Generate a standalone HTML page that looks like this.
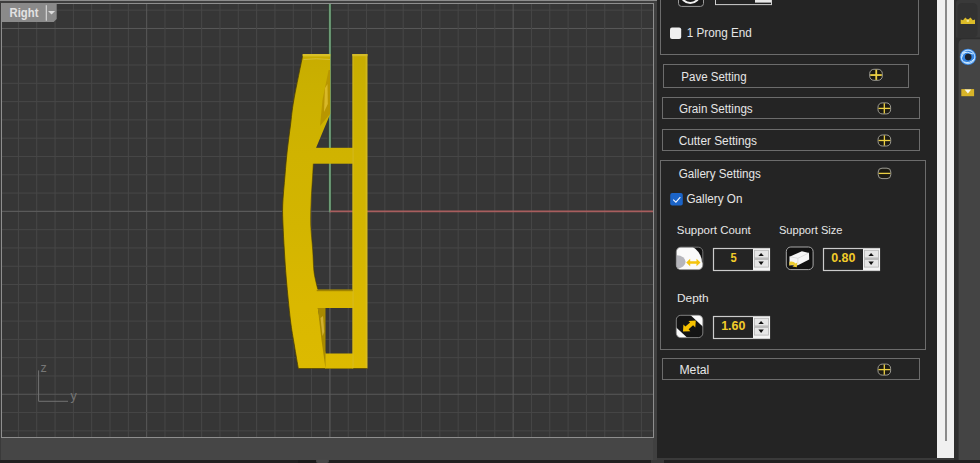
<!DOCTYPE html>
<html><head><meta charset="utf-8"><title>Rhino Gallery Settings</title>
<style>html,body{margin:0;padding:0;width:980px;height:463px;overflow:hidden;background:#1e1e1e;font-family:"Liberation Sans",sans-serif;}</style>
</head><body><svg width="980" height="463" viewBox="0 0 980 463" style="position:absolute;left:0;top:0;display:block"><rect x="0" y="0" width="980" height="463" fill="#1e1e1e"/><rect x="0" y="0" width="657" height="1" fill="#8c8c8c"/><rect x="0" y="1" width="657" height="2" fill="#3e3e3e"/><rect x="0" y="437" width="657" height="23" fill="#464646"/><rect x="653" y="3" width="4" height="457" fill="#404040"/><rect x="0" y="3" width="1" height="457" fill="#3a3a3a"/><rect x="2" y="4" width="651" height="433" fill="#363636"/><line x1="18.41" y1="4" x2="18.41" y2="437" stroke="#474747" stroke-width="1"/><line x1="36.73" y1="4" x2="36.73" y2="437" stroke="#474747" stroke-width="1"/><line x1="55.05" y1="4" x2="55.05" y2="437" stroke="#474747" stroke-width="1"/><line x1="73.38" y1="4" x2="73.38" y2="437" stroke="#474747" stroke-width="1"/><line x1="91.7" y1="4" x2="91.7" y2="437" stroke="#474747" stroke-width="1"/><line x1="110.02" y1="4" x2="110.02" y2="437" stroke="#474747" stroke-width="1"/><line x1="128.35" y1="4" x2="128.35" y2="437" stroke="#474747" stroke-width="1"/><line x1="2" y1="10.16" x2="653" y2="10.16" stroke="#474747" stroke-width="1"/><line x1="146.67" y1="4" x2="146.67" y2="437" stroke="#5a5a5a" stroke-width="1"/><line x1="2" y1="28.45" x2="653" y2="28.45" stroke="#5a5a5a" stroke-width="1"/><line x1="164.99" y1="4" x2="164.99" y2="437" stroke="#474747" stroke-width="1"/><line x1="2" y1="46.74" x2="653" y2="46.74" stroke="#474747" stroke-width="1"/><line x1="183.32" y1="4" x2="183.32" y2="437" stroke="#474747" stroke-width="1"/><line x1="2" y1="65.03" x2="653" y2="65.03" stroke="#474747" stroke-width="1"/><line x1="201.64" y1="4" x2="201.64" y2="437" stroke="#474747" stroke-width="1"/><line x1="2" y1="83.32" x2="653" y2="83.32" stroke="#474747" stroke-width="1"/><line x1="219.96" y1="4" x2="219.96" y2="437" stroke="#474747" stroke-width="1"/><line x1="2" y1="101.61" x2="653" y2="101.61" stroke="#474747" stroke-width="1"/><line x1="238.28" y1="4" x2="238.28" y2="437" stroke="#474747" stroke-width="1"/><line x1="2" y1="119.9" x2="653" y2="119.9" stroke="#474747" stroke-width="1"/><line x1="256.61" y1="4" x2="256.61" y2="437" stroke="#474747" stroke-width="1"/><line x1="2" y1="138.19" x2="653" y2="138.19" stroke="#474747" stroke-width="1"/><line x1="274.93" y1="4" x2="274.93" y2="437" stroke="#474747" stroke-width="1"/><line x1="2" y1="156.48" x2="653" y2="156.48" stroke="#474747" stroke-width="1"/><line x1="293.25" y1="4" x2="293.25" y2="437" stroke="#474747" stroke-width="1"/><line x1="2" y1="174.77" x2="653" y2="174.77" stroke="#474747" stroke-width="1"/><line x1="311.58" y1="4" x2="311.58" y2="437" stroke="#474747" stroke-width="1"/><line x1="2" y1="193.06" x2="653" y2="193.06" stroke="#474747" stroke-width="1"/><line x1="348.22" y1="4" x2="348.22" y2="437" stroke="#474747" stroke-width="1"/><line x1="2" y1="229.64" x2="653" y2="229.64" stroke="#474747" stroke-width="1"/><line x1="366.55" y1="4" x2="366.55" y2="437" stroke="#474747" stroke-width="1"/><line x1="2" y1="247.93" x2="653" y2="247.93" stroke="#474747" stroke-width="1"/><line x1="384.87" y1="4" x2="384.87" y2="437" stroke="#474747" stroke-width="1"/><line x1="2" y1="266.22" x2="653" y2="266.22" stroke="#474747" stroke-width="1"/><line x1="403.19" y1="4" x2="403.19" y2="437" stroke="#474747" stroke-width="1"/><line x1="2" y1="284.51" x2="653" y2="284.51" stroke="#474747" stroke-width="1"/><line x1="421.51" y1="4" x2="421.51" y2="437" stroke="#474747" stroke-width="1"/><line x1="2" y1="302.8" x2="653" y2="302.8" stroke="#474747" stroke-width="1"/><line x1="439.84" y1="4" x2="439.84" y2="437" stroke="#474747" stroke-width="1"/><line x1="2" y1="321.09" x2="653" y2="321.09" stroke="#474747" stroke-width="1"/><line x1="458.16" y1="4" x2="458.16" y2="437" stroke="#474747" stroke-width="1"/><line x1="2" y1="339.38" x2="653" y2="339.38" stroke="#474747" stroke-width="1"/><line x1="476.48" y1="4" x2="476.48" y2="437" stroke="#474747" stroke-width="1"/><line x1="2" y1="357.67" x2="653" y2="357.67" stroke="#474747" stroke-width="1"/><line x1="494.81" y1="4" x2="494.81" y2="437" stroke="#474747" stroke-width="1"/><line x1="2" y1="375.96" x2="653" y2="375.96" stroke="#474747" stroke-width="1"/><line x1="513.13" y1="4" x2="513.13" y2="437" stroke="#5a5a5a" stroke-width="1"/><line x1="2" y1="394.25" x2="653" y2="394.25" stroke="#5a5a5a" stroke-width="1"/><line x1="531.45" y1="4" x2="531.45" y2="437" stroke="#474747" stroke-width="1"/><line x1="2" y1="412.54" x2="653" y2="412.54" stroke="#474747" stroke-width="1"/><line x1="549.78" y1="4" x2="549.78" y2="437" stroke="#474747" stroke-width="1"/><line x1="2" y1="430.83" x2="653" y2="430.83" stroke="#474747" stroke-width="1"/><line x1="568.1" y1="4" x2="568.1" y2="437" stroke="#474747" stroke-width="1"/><line x1="586.42" y1="4" x2="586.42" y2="437" stroke="#474747" stroke-width="1"/><line x1="604.75" y1="4" x2="604.75" y2="437" stroke="#474747" stroke-width="1"/><line x1="623.07" y1="4" x2="623.07" y2="437" stroke="#474747" stroke-width="1"/><line x1="641.39" y1="4" x2="641.39" y2="437" stroke="#474747" stroke-width="1"/><line x1="329.9" y1="211" x2="329.9" y2="437" stroke="#5a5a5a" stroke-width="1.2"/><line x1="2" y1="211.35" x2="330" y2="211.35" stroke="#5a5a5a" stroke-width="1.2"/><line x1="328.1" y1="4" x2="328.1" y2="210" stroke="#2f3a30" stroke-width="1"/><line x1="331.7" y1="4" x2="331.7" y2="210" stroke="#2f3a30" stroke-width="1"/><line x1="329.9" y1="4" x2="329.9" y2="212.3" stroke="#6c9c76" stroke-width="2"/><line x1="329.9" y1="211.35" x2="653" y2="211.35" stroke="#a85e5e" stroke-width="1.9"/><rect x="1.5" y="3.5" width="652.0" height="434.0" fill="none" stroke="#8e8e8e" stroke-width="1"/><defs><linearGradient id="gb" gradientUnits="userSpaceOnUse" x1="0" y1="54" x2="0" y2="369"><stop offset="0" stop-color="#c8ac00"/><stop offset="0.1" stop-color="#cab000"/><stop offset="0.32" stop-color="#d0b300"/><stop offset="0.55" stop-color="#d3b500"/><stop offset="0.8" stop-color="#dab800"/><stop offset="1" stop-color="#dcba00"/></linearGradient></defs><rect x="352.4" y="54" width="15" height="314.5" fill="url(#gb)"/><rect x="365.6" y="54" width="1.8" height="314.5" fill="#d8c040" fill-opacity="0.45"/><path d="M303,54 L330.2,54 L330.2,114 L316.2,147.5 L313.8,158 C313.37,162.50 313.08,168.33 312.70,175.00 C312.32,181.67 311.52,191.67 311.20,200.00 C310.88,208.33 310.55,216.67 310.80,225.00 C311.05,233.33 312.20,242.50 312.70,250.00 C313.20,257.50 313.33,265.00 313.80,270.00 C314.27,275.00 314.85,276.83 315.50,280.00 C316.15,283.17 317.33,287.50 317.70,289.00 L317.8,308 L325.5,353.4 L325.5,368.5 L298.3,368.5 C297.63,364.58 295.62,353.08 294.30,345.00 C292.98,336.92 291.72,330.83 290.40,320.00 C289.08,309.17 287.42,291.67 286.40,280.00 C285.38,268.33 284.87,259.17 284.30,250.00 C283.73,240.83 283.27,232.50 283.00,225.00 C282.73,217.50 282.37,213.33 282.70,205.00 C283.03,196.67 284.23,184.17 285.00,175.00 C285.77,165.83 286.38,158.33 287.30,150.00 C288.22,141.67 289.42,133.33 290.50,125.00 C291.58,116.67 291.72,111.83 293.80,100.00 C295.88,88.17 301.47,61.67 303.00,54.00 Z" fill="url(#gb)"/><path d="M298.3,368.5 C297.63,364.58 295.62,353.08 294.30,345.00 C292.98,336.92 291.72,330.83 290.40,320.00 C289.08,309.17 287.42,291.67 286.40,280.00 C285.38,268.33 284.87,259.17 284.30,250.00 C283.73,240.83 283.27,232.50 283.00,225.00 C282.73,217.50 282.37,213.33 282.70,205.00 C283.03,196.67 284.23,184.17 285.00,175.00 C285.77,165.83 286.38,158.33 287.30,150.00 C288.22,141.67 289.42,133.33 290.50,125.00 C291.58,116.67 291.72,111.83 293.80,100.00 C295.88,88.17 301.47,61.67 303.00,54.00" fill="none" stroke="#4a3c00" stroke-width="0.9" stroke-opacity="0.85"/><path d="M313.5,160 C313.37,162.50 313.08,168.33 312.70,175.00 C312.32,181.67 311.52,191.67 311.20,200.00 C310.88,208.33 310.55,216.67 310.80,225.00 C311.05,233.33 312.20,242.50 312.70,250.00 C313.20,257.50 313.33,265.00 313.80,270.00 C314.27,275.00 314.85,276.83 315.50,280.00 C316.15,283.17 317.33,287.50 317.70,289.00" fill="none" stroke="#4a3c00" stroke-width="0.8" stroke-opacity="0.7"/><path d="M298.3,368.5 L367.4,368.5" fill="none" stroke="#4a3c00" stroke-width="0.8" stroke-opacity="0.8"/><rect x="312" y="147.8" width="41" height="15.9" fill="url(#gb)"/><rect x="315" y="289.7" width="38" height="18.3" fill="url(#gb)"/><rect x="325" y="353.5" width="28" height="15" fill="url(#gb)"/><rect x="302.6" y="54" width="27.6" height="2.4" fill="#d8c028"/><path d="M303.5,59.5 Q316,58 330,59.5" fill="none" stroke="#d8c448" stroke-width="0.8"/><rect x="352.4" y="54" width="15" height="2.2" fill="#d4bc28"/><rect x="352.4" y="54" width="1.4" height="314.5" fill="#d8c040" fill-opacity="0.35"/><path d="M328.6,70 L330,70 L330,114 L320,126 L322.5,100 Z" fill="#b89600"/><path d="M325,88 L327.5,84 L327.8,104 L324,112 Z" fill="#d8b828"/><path d="M317.8,308 L325.5,308 L325.5,368.5 L321.5,340 Z" fill="#a88a00"/><path d="M320.5,318 L323,316 L324.2,332 L322.5,336 Z" fill="#d0b030"/><rect x="316.7" y="289.7" width="36" height="1.5" fill="#a08400"/><path d="M38.6,370.4 V401.3 H68" fill="none" stroke="#727272" stroke-width="1"/><text x="40.6" y="371.8" font-size="12.5" fill="#767676" font-family="Liberation Sans">z</text><text x="70.4" y="400.3" font-size="12.5" fill="#767676" font-family="Liberation Sans">y</text><path d="M2,3 H56.7 V19 L53.7,22 H2 Z" fill="#8a8a8a"/><text x="9.6" y="16.9" font-size="12.6" font-weight="bold" fill="#e2e2e2" font-family="Liberation Sans" textLength="28.8" lengthAdjust="spacingAndGlyphs">Right</text><rect x="45.7" y="5.2" width="1.3" height="15.5" fill="#cfcfcf"/><path d="M48,11 H55.1 L51.55,14.6 Z" fill="#dcdcdc"/><rect x="657" y="0" width="280" height="458" fill="#242424"/><rect x="657" y="458" width="297" height="2" fill="#3a3a3a"/><rect x="660.5" y="-9.5" width="258" height="64" fill="none" stroke="#6c6c6c" stroke-width="1"/><rect x="663.5" y="64.5" width="245" height="23" fill="none" stroke="#6c6c6c" stroke-width="1"/><rect x="662.5" y="97.5" width="257" height="21" fill="none" stroke="#6c6c6c" stroke-width="1"/><rect x="662.5" y="129.5" width="257" height="21" fill="none" stroke="#6c6c6c" stroke-width="1"/><rect x="660.5" y="160.5" width="265" height="189" fill="none" stroke="#6c6c6c" stroke-width="1"/><rect x="662.5" y="358.5" width="257" height="21" fill="none" stroke="#6c6c6c" stroke-width="1"/><g font-family="Liberation Sans"><text x="686.7" y="37.3" font-size="12.5" fill="#e6e6e6" textLength="65.0" lengthAdjust="spacingAndGlyphs">1 Prong End</text><text x="681.3" y="80.7" font-size="12" fill="#e6e6e6" textLength="65.3" lengthAdjust="spacingAndGlyphs">Pave Setting</text><text x="678.9" y="113.2" font-size="12" fill="#e6e6e6" textLength="73.8" lengthAdjust="spacingAndGlyphs">Grain Settings</text><text x="678.7" y="145.3" font-size="12" fill="#e6e6e6" textLength="78.3" lengthAdjust="spacingAndGlyphs">Cutter Settings</text><text x="678.7" y="178.3" font-size="12" fill="#e6e6e6" textLength="82.2" lengthAdjust="spacingAndGlyphs">Gallery Settings</text><text x="686.5" y="202.6" font-size="12" fill="#e6e6e6" textLength="55.9" lengthAdjust="spacingAndGlyphs">Gallery On</text><text x="676.8" y="234" font-size="11" fill="#e6e6e6" textLength="74.0" lengthAdjust="spacingAndGlyphs">Support Count</text><text x="778.9" y="234" font-size="11" fill="#e6e6e6" textLength="63.6" lengthAdjust="spacingAndGlyphs">Support Size</text><text x="677.0" y="301.8" font-size="11" fill="#e6e6e6" textLength="31.7" lengthAdjust="spacingAndGlyphs">Depth</text><text x="679.4" y="373.8" font-size="12" fill="#e6e6e6" textLength="29.9" lengthAdjust="spacingAndGlyphs">Metal</text></g><rect x="869.7" y="69.3" width="12.6" height="11" rx="4.2" fill="#1c1a12" stroke="#aaa9a0" stroke-width="0.9"/><rect x="870.2" y="74.14999999999999" width="11.6" height="1.8" fill="#ecd044"/><rect x="875.35" y="69.7" width="1.8" height="10.2" fill="#ecd044"/><rect x="878.0" y="102.9" width="12.6" height="11" rx="4.2" fill="#1c1a12" stroke="#aaa9a0" stroke-width="0.9"/><rect x="878.5" y="107.75" width="11.6" height="1.3" fill="#ecd044"/><rect x="883.65" y="103.30000000000001" width="1.3" height="10.2" fill="#ecd044"/><rect x="878.1" y="135.0" width="12.6" height="11" rx="4.2" fill="#1c1a12" stroke="#aaa9a0" stroke-width="0.9"/><rect x="878.6" y="139.85" width="11.6" height="1.3" fill="#ecd044"/><rect x="883.75" y="135.4" width="1.3" height="10.2" fill="#ecd044"/><rect x="878.2" y="168.2" width="12.6" height="10.4" rx="3.8" fill="#1c1a12" stroke="#aaa9a0" stroke-width="0.9"/><rect x="878.7" y="172.75" width="11.6" height="1.3" fill="#ecd044"/><rect x="878.0" y="364.1" width="12.6" height="11" rx="4.2" fill="#1c1a12" stroke="#aaa9a0" stroke-width="0.9"/><rect x="878.5" y="368.95000000000005" width="11.6" height="1.3" fill="#ecd044"/><rect x="883.65" y="364.5" width="1.3" height="10.2" fill="#ecd044"/><rect x="670" y="27.5" width="11.2" height="11.4" rx="2" fill="#f0f0f0"/><rect x="670.2" y="193" width="12.6" height="12.6" rx="2" fill="#1b64c8"/><path d="M673.2,199.6 L675.9,202.2 L680.3,197.1" fill="none" stroke="#f4f8ff" stroke-width="1.05"/><rect x="678.5" y="-10" width="25" height="16.4" rx="3" fill="#1a1a1a" stroke="#9a9a9a" stroke-width="1"/><circle cx="690.3" cy="-6.5" r="9.5" fill="none" stroke="#f0f0f0" stroke-width="2"/><rect x="715.5" y="-10" width="56" height="14.6" fill="#232323" stroke="#cfcfcf" stroke-width="1"/><rect x="755" y="-10" width="16" height="12.6" fill="#e8e8e8"/><rect x="713.5" y="248.5" width="56" height="22" fill="#242424" stroke="#cccccc" stroke-width="1.2"/><rect x="753" y="249" width="17" height="21" fill="#f4f4f4"/><rect x="754.5" y="250.3" width="14" height="7.6" fill="#e6e6e6" stroke="#b4b4b4" stroke-width="0.8"/><rect x="754.5" y="259.5" width="14" height="7.6" fill="#e6e6e6" stroke="#b4b4b4" stroke-width="0.8"/><rect x="754" y="258" width="15" height="1.4" fill="#bcbcbc"/><path d="M758.4,256 L763.8000000000001,256 L761.1,253 Z" fill="#111"/><path d="M758.4,261.5 L763.8000000000001,261.5 L761.1,265 Z" fill="#111"/><text x="730.6" y="262.2" font-size="13" font-weight="bold" fill="#f2cc2a" font-family="Liberation Sans" textLength="6.2" lengthAdjust="spacingAndGlyphs">5</text><rect x="823.5" y="248.5" width="56" height="22" fill="#242424" stroke="#cccccc" stroke-width="1.2"/><rect x="863" y="249" width="17" height="21" fill="#f4f4f4"/><rect x="864.5" y="250.3" width="14" height="7.6" fill="#e6e6e6" stroke="#b4b4b4" stroke-width="0.8"/><rect x="864.5" y="259.5" width="14" height="7.6" fill="#e6e6e6" stroke="#b4b4b4" stroke-width="0.8"/><rect x="864" y="258" width="15" height="1.4" fill="#bcbcbc"/><path d="M868.4,256 L873.8000000000001,256 L871.1,253 Z" fill="#111"/><path d="M868.4,261.5 L873.8000000000001,261.5 L871.1,265 Z" fill="#111"/><text x="831.2" y="262.2" font-size="13" font-weight="bold" fill="#f2cc2a" font-family="Liberation Sans" textLength="24.2" lengthAdjust="spacingAndGlyphs">0.80</text><rect x="713.5" y="316.5" width="56" height="22" fill="#242424" stroke="#cccccc" stroke-width="1.2"/><rect x="753" y="317" width="17" height="21" fill="#f4f4f4"/><rect x="754.5" y="318.3" width="14" height="7.6" fill="#e6e6e6" stroke="#b4b4b4" stroke-width="0.8"/><rect x="754.5" y="327.5" width="14" height="7.6" fill="#e6e6e6" stroke="#b4b4b4" stroke-width="0.8"/><rect x="754" y="326" width="15" height="1.4" fill="#bcbcbc"/><path d="M758.4,324 L763.8000000000001,324 L761.1,321 Z" fill="#111"/><path d="M758.4,329.5 L763.8000000000001,329.5 L761.1,333 Z" fill="#111"/><text x="721.2" y="330.2" font-size="13" font-weight="bold" fill="#f2cc2a" font-family="Liberation Sans" textLength="24.2" lengthAdjust="spacingAndGlyphs">1.60</text><defs><clipPath id="c1"><rect x="676.3" y="247.2" width="26.5" height="22.4" rx="4.5"/></clipPath><clipPath id="c2"><rect x="786.3" y="247" width="26.8" height="22.6" rx="4.5"/></clipPath><clipPath id="c3"><rect x="676.3" y="315.3" width="26.5" height="22.3" rx="4.5"/></clipPath></defs><g clip-path="url(#c1)"><rect x="676" y="247" width="27" height="23" fill="#111"/><ellipse cx="680" cy="262.5" rx="22" ry="19" fill="#fafafa"/><rect x="676" y="262.5" width="27" height="8" fill="#fafafa"/><ellipse cx="677" cy="261.8" rx="8.6" ry="6.6" fill="#b6b6bc"/></g><rect x="676.3" y="247.2" width="26.5" height="22.4" rx="4.5" fill="none" stroke="#8a8a8a" stroke-width="0.8"/><path d="M686.2,262.5 L690.2,258.8 V261.2 H696.5 V258.8 L700.5,262.5 L696.5,266.2 V263.8 H690.2 V266.2 Z" fill="#f4c40c"/><g clip-path="url(#c2)"><rect x="786" y="247" width="27" height="23" fill="#111"/></g><rect x="786.3" y="247" width="26.8" height="22.6" rx="4.5" fill="none" stroke="#a8a8a8" stroke-width="1"/><path d="M789.5,256.7 L801.9,251.3 L809,252.9 L809.2,259.6 L797.9,265.2 L789.5,265.2 Z" fill="#f6f6f6"/><path d="M797.9,258.3 V265 M789.5,256.7 L797.9,258.3 L809,252.9" fill="none" stroke="#cfcfcf" stroke-width="0.6"/><path d="M789.4,261.8 Q793.5,260.8 795.6,263.6 L797.2,262.6 L796.8,267.3 L792.4,266.6 L794.1,265.4 Q792,263.9 789.4,265.8 Z" fill="#eccc30"/><g clip-path="url(#c3)"><rect x="676" y="315" width="27" height="23" fill="#141414"/><path d="M690.3,315 L703,315 L703,326.8 Z" fill="#fafafa"/><path d="M676,327.3 L687.5,338 L676,338 Z" fill="#fafafa"/></g><rect x="676.3" y="315.3" width="26.5" height="22.3" rx="4.5" fill="none" stroke="#9a9a9a" stroke-width="0.8"/><path d="M695.8,320.4 L695.3,327.4 L693.1,325.2 L688.6,329.2 L690.3,331.2 L683,331.5 L683.4,324.4 L685.4,326.5 L690.1,322.6 L688.4,320.9 Z" fill="#f6c200"/><rect x="937" y="0" width="17" height="458" fill="#f0f0f0"/><rect x="945" y="0" width="2" height="441" fill="#8a8a8a"/><rect x="954" y="0" width="26" height="460" fill="#2e2e2e"/><path d="M956,37.5 V3 Q956,0 959,0 H980 V37.5 Z" fill="#393939"/><path d="M957.5,37.5 V8 Q957.5,3 962.5,3 H972.5 Q977.5,3 977.5,8 V32.5 Q977.5,37.5 972.5,37.5 Z" fill="#323232"/><path d="M958.6,460 V44.3 Q958.6,39.3 963.6,39.3 H980 V460 Z" fill="#444444"/><path d="M960.7,24 V19.6 L963,20.2 L965.3,17.6 L967.8,19.8 L970.5,17.6 L972.8,20.2 L975,19.6 V24 Z" fill="#dcbc28"/><circle cx="967.8" cy="20.8" r="1.3" fill="#f4e890"/><circle cx="968" cy="56.9" r="8.2" fill="#3584e0"/><circle cx="968" cy="56.9" r="6.8" fill="none" stroke="#b8dcff" stroke-width="1.1"/><path d="M962,53 Q967,51 973,54 M974,59 Q970,64 964,62 M961.5,58 Q962,53.5 966,52" fill="none" stroke="#d0ecff" stroke-width="1"/><circle cx="968.2" cy="57.1" r="3.3" fill="#1c222c"/><rect x="961.3" y="89.1" width="12.8" height="7.1" fill="#d8b428"/><path d="M964.6,89.6 L971.2,89.6 L967.9,93.4 Z" fill="#f8f8ee"/><rect x="0" y="460" width="980" height="3" fill="#202020"/><rect x="298" y="460" width="18" height="3" fill="#1a1a1a"/><rect x="651" y="460" width="13" height="3" fill="#383838"/><rect x="316" y="459" width="13" height="4" rx="2" fill="#474747"/></svg></body></html>
